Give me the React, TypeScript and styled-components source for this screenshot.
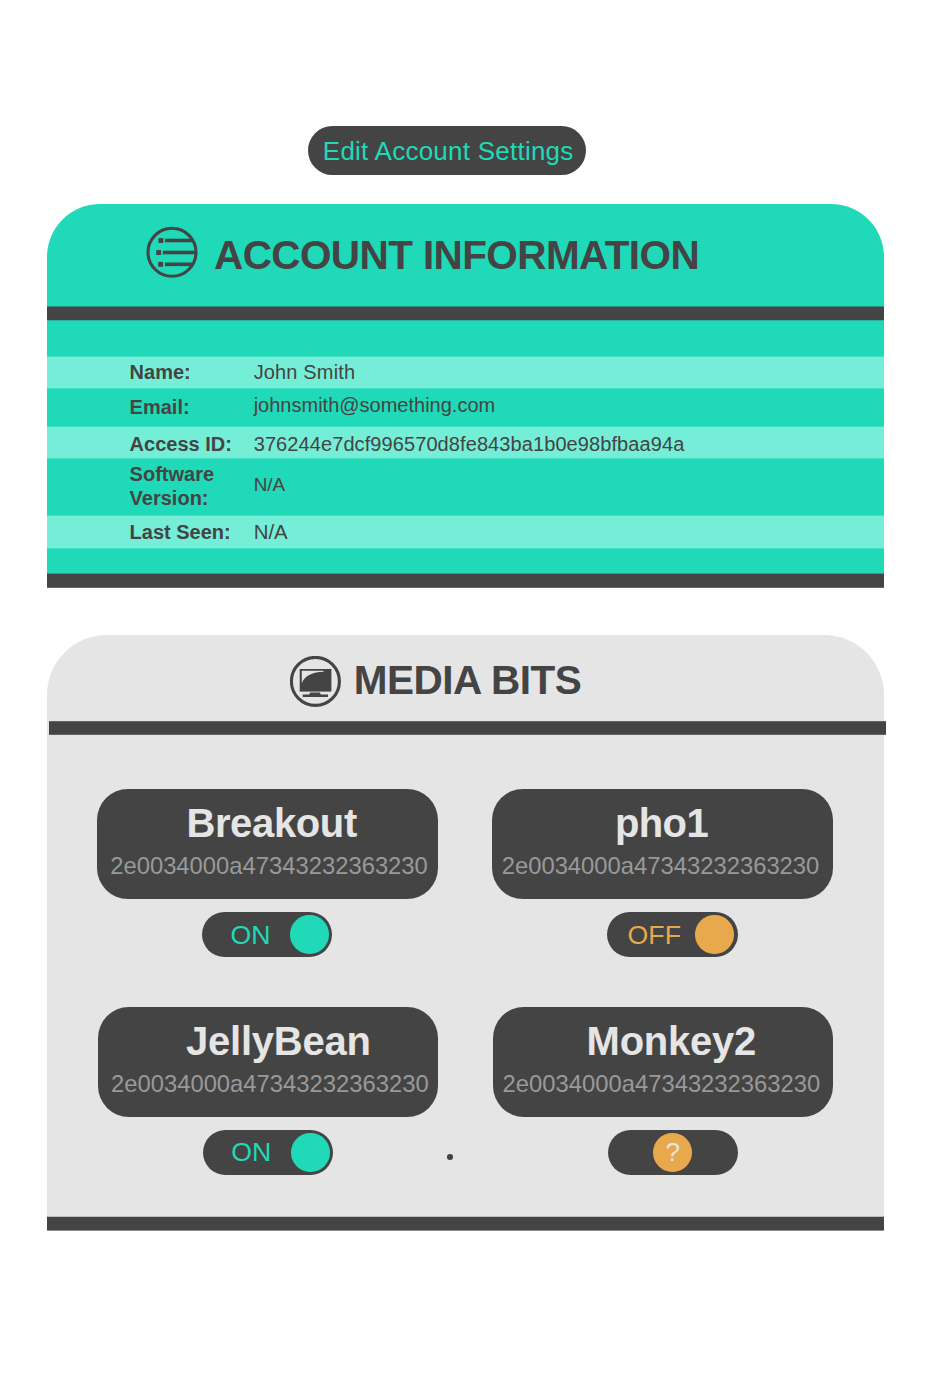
import React from 'react';
import styled, { createGlobalStyle } from 'styled-components';

const teal = '#20d9b8';
const mint = '#75eed8';
const ink = '#444444';
const fog = '#e5e5e5';
const amber = '#e8a84c';

const GlobalStyle = createGlobalStyle`
  *, *::before, *::after { box-sizing: border-box; }
  body {
    margin: 0;
    background: #ffffff;
    color: ${ink};
    font-family: "Liberation Sans", Arial, Helvetica, sans-serif;
  }
`;

const Page = styled.main`
  width: 951px;
  height: 1379px;
  padding: 126px 0 0 47px;
  display: flex;
  flex-direction: column;
  align-items: flex-start;
  overflow: hidden;
`;

const EditButton = styled.button`
  width: 277.5px;
  height: 49px;
  margin-left: 261px;
  padding: 0 0 0 14.8px;
  border: 0;
  border-radius: 25px;
  background: ${ink};
  color: ${teal};
  font: 26px/50px "Liberation Sans", Arial, sans-serif;
  letter-spacing: 0.24px;
  text-align: left;
  white-space: nowrap;
`;

const Panel = styled.section<{ $tone: string; $radius: number; $gap: number }>`
  width: 837px;
  margin-top: ${p => p.$gap}px;
  border-radius: ${p => p.$radius}px ${p => p.$radius}px 0 0;
  background: ${p => p.$tone};
`;

const PanelHeader = styled.header<{ $height: number; $indent: number; $top: number }>`
  display: flex;
  align-items: flex-start;
  height: ${p => p.$height}px;
  padding: ${p => p.$top}px 0 0 ${p => p.$indent}px;
`;

const PanelIcon = styled.svg`
  flex: none;
  width: 52px;
  height: 52px;
`;

const PanelTitle = styled.h2<{ $gap: number; $drop: number; $tracking: number }>`
  margin: ${p => p.$drop}px 0 0 ${p => p.$gap}px;
  font-size: 40.5px;
  font-weight: bold;
  line-height: 48px;
  letter-spacing: ${p => p.$tracking}px;
  white-space: nowrap;
`;

const Rule = styled.div<{ $height: number; $top: number; $bottom: number; $shift?: number }>`
  height: ${p => p.$height}px;
  margin-left: ${p => p.$shift ?? 0}px;
  margin-right: ${p => -(p.$shift ?? 0)}px;
  border-top: 1px solid rgba(68, 68, 68, ${p => p.$top});
  border-bottom: 1px solid rgba(68, 68, 68, ${p => p.$bottom});
  background: ${ink};
  background-clip: padding-box;
`;

const Details = styled.dl`
  height: 252px;
  margin: 0;
  padding-top: 35px;
`;

const DetailRow = styled.div<{ $height: number; $striped?: boolean }>`
  display: grid;
  grid-template-columns: 123.7px 1fr;
  align-items: start;
  height: ${p => p.$height}px;
  padding-left: 82.6px;
  border-top: 1px solid ${p => (p.$striped ? 'rgba(117, 238, 216, 0.4)' : 'transparent')};
  border-bottom: 1px solid ${p => (p.$striped ? 'rgba(117, 238, 216, 0.4)' : 'transparent')};
  background: ${p => (p.$striped ? mint : 'transparent')};
  background-clip: padding-box;
`;

const Term = styled.dt<{ $top: number }>`
  width: 110px;
  padding-top: ${p => p.$top}px;
  font-size: 20px;
  font-weight: bold;
  line-height: 24px;
`;

const Value = styled.dd<{ $top: number; $size?: number; $tracking?: number }>`
  margin: 0;
  padding: ${p => p.$top}px 0 0 0.4px;
  font-size: ${p => p.$size ?? 20}px;
  line-height: 24px;
  letter-spacing: ${p => p.$tracking ?? 0}px;
  white-space: nowrap;
`;

const Bits = styled.div`
  height: 481px;
  padding-top: 54px;
`;

const BitRow = styled.div<{ $indent: number }>`
  display: flex;
  height: 218px;
  padding-left: ${p => p.$indent}px;
`;

const Gutter = styled.div`
  flex: none;
  width: 54.5px;
  padding: 147px 0 0 9.2px;
`;

const Dot = styled.div`
  width: 5.6px;
  height: 5.6px;
  border-radius: 50%;
  background: ${ink};
`;

const Bit = styled.article`
  flex: none;
  width: 340.5px;
`;

const Plate = styled.div`
  height: 110px;
  padding-top: 10px;
  border-radius: 31px;
  background: ${ink};
  white-space: nowrap;
`;

const BitName = styled.h3<{ $indent: number; $tracking: number }>`
  margin: 0;
  padding-left: ${p => p.$indent}px;
  color: ${fog};
  font-size: 40px;
  font-weight: bold;
  line-height: 48px;
  letter-spacing: ${p => p.$tracking}px;
`;

const BitCode = styled.p<{ $indent: number }>`
  margin: 5px 0 0;
  padding-left: ${p => p.$indent}px;
  color: #999999;
  font-size: 23.8px;
  line-height: 28px;
`;

const Switch = styled.div<{ $indent: number; $centered: boolean }>`
  display: flex;
  justify-content: ${p => (p.$centered ? 'center' : 'space-between')};
  width: 130.4px;
  height: 44.5px;
  margin: 13px 0 0 ${p => p.$indent}px;
  padding: 3px 3.6px 0 ${p => (p.$centered ? 2.5 : 0)}px;
  border-radius: 23px;
  background: ${ink};
`;

const SwitchLabel = styled.span<{ $color: string; $indent: number; $drop: number }>`
  margin: ${p => p.$drop}px 0 0 ${p => p.$indent}px;
  color: ${p => p.$color};
  font-size: 26.7px;
  line-height: 38px;
`;

const Knob = styled.span<{ $color: string }>`
  flex: none;
  width: 38.5px;
  height: 38.5px;
  border-radius: 50%;
  background: ${p => p.$color};
  color: ${fog};
  font-size: 26px;
  line-height: 38px;
  text-align: center;
`;

type BitInfo = {
  name: string;
  nameIndent: number;
  tracking: number;
  codeIndent: number;
  switchIndent: number;
  state: 'on' | 'off' | 'unknown';
  labelDrop: number;
};

const code = '2e0034000a47343232363230';

const rows: { indent: number; dot: boolean; bits: [BitInfo, BitInfo] }[] = [
  {
    indent: 50,
    dot: false,
    bits: [
      { name: 'Breakout', nameIndent: 89.4, tracking: -0.36, codeIndent: 13.2, switchIndent: 105, state: 'on', labelDrop: 1 },
      { name: 'pho1', nameIndent: 122.9, tracking: -0.6, codeIndent: 9.7, switchIndent: 115.2, state: 'off', labelDrop: 1 },
    ],
  },
  {
    indent: 50.6,
    dot: true,
    bits: [
      { name: 'JellyBean', nameIndent: 88.5, tracking: -0.25, codeIndent: 13.4, switchIndent: 105.2, state: 'on', labelDrop: 0 },
      { name: 'Monkey2', nameIndent: 94, tracking: -0.25, codeIndent: 10, switchIndent: 115.4, state: 'unknown', labelDrop: 0 },
    ],
  },
];

const ListIcon = () => (
  <PanelIcon viewBox="0 0 52 52" aria-hidden="true">
    <defs>
      <clipPath id="list-clip"><circle cx="26" cy="26.3" r="24.5" /></clipPath>
    </defs>
    <circle cx="26" cy="26.3" r="24" fill="none" stroke={ink} strokeWidth="3.1" />
    <g fill={ink} clipPath="url(#list-clip)">
      <rect x="12.5" y="12.1" width="4.9" height="4.9" />
      <rect x="19" y="12.7" width="32" height="3.6" />
      <rect x="10.2" y="24.1" width="4.9" height="4.9" />
      <rect x="16.9" y="24.7" width="34" height="3.6" />
      <rect x="12.2" y="35.9" width="4.9" height="4.9" />
      <rect x="19" y="36.5" width="32" height="3.6" />
    </g>
  </PanelIcon>
);

const ScreenIcon = () => (
  <PanelIcon viewBox="0 0 52 52" aria-hidden="true">
    <circle cx="25.4" cy="25.4" r="24" fill="none" stroke={ink} strokeWidth="3.1" />
    <rect x="9.7" y="13" width="31.7" height="22.6" fill={ink} />
    <path d="M11.8 14.7H33.5V15.8C23 16 14.5 19.5 11.8 27.2Z" fill={fog} />
    <path d="M20.2 36.6H29.8L30.8 38.4H38V41H12.7V38.4H19.2Z" fill={ink} />
  </PanelIcon>
);

const BitCard = ({ bit }: { bit: BitInfo }) => {
  const color = bit.state === 'on' ? teal : amber;
  const unknown = bit.state === 'unknown';
  return (
    <Bit>
      <Plate>
        <BitName $indent={bit.nameIndent} $tracking={bit.tracking}>{bit.name}</BitName>
        <BitCode $indent={bit.codeIndent}>{code}</BitCode>
      </Plate>
      <Switch $indent={bit.switchIndent} $centered={unknown}>
        {!unknown && (
          <SwitchLabel $color={color} $indent={bit.state === 'on' ? 28.4 : 20.4} $drop={bit.labelDrop}>
            {bit.state === 'on' ? 'ON' : 'OFF'}
          </SwitchLabel>
        )}
        <Knob $color={color}>{unknown ? '?' : null}</Knob>
      </Switch>
    </Bit>
  );
};

export default function App() {
  return (
    <Page>
      <GlobalStyle />
      <EditButton type="button">Edit Account Settings</EditButton>

      <Panel $tone={teal} $radius={53} $gap={29}>
        <PanelHeader $height={102} $indent={99} $top={22}>
          <ListIcon />
          <PanelTitle $gap={16} $drop={5} $tracking={-0.6}>ACCOUNT INFORMATION</PanelTitle>
        </PanelHeader>
        <Rule $height={15} $top={0.5} $bottom={0.25} />
        <Details>
          <DetailRow $height={33} $striped>
            <Term $top={3}>Name:</Term>
            <Value $top={3} $tracking={0.15}>John Smith</Value>
          </DetailRow>
          <DetailRow $height={37}>
            <Term $top={5}>Email:</Term>
            <Value $top={3}>johnsmith@something.com</Value>
          </DetailRow>
          <DetailRow $height={33} $striped>
            <Term $top={5}>Access ID:</Term>
            <Value $top={5} $tracking={0.09}>376244e7dcf996570d8fe843ba1b0e98bfbaa94a</Value>
          </DetailRow>
          <DetailRow $height={56}>
            <Term $top={2}>Software Version:</Term>
            <Value $top={13} $size={18.9}>N/A</Value>
          </DetailRow>
          <DetailRow $height={34} $striped>
            <Term $top={4}>Last Seen:</Term>
            <Value $top={4} $size={20.4}>N/A</Value>
          </DetailRow>
        </Details>
        <Rule $height={15} $top={0.4} $bottom={0.6} />
      </Panel>

      <Panel $tone={fog} $radius={60} $gap={47}>
        <PanelHeader $height={86} $indent={243} $top={21}>
          <ScreenIcon />
          <PanelTitle $gap={11.7} $drop={0} $tracking={-0.5}>MEDIA BITS</PanelTitle>
        </PanelHeader>
        <Rule $height={14} $top={0.8} $bottom={0.8} $shift={2} />
        <Bits>
          {rows.map(row => (
            <BitRow key={row.indent} $indent={row.indent}>
              <BitCard bit={row.bits[0]} />
              <Gutter>{row.dot && <Dot />}</Gutter>
              <BitCard bit={row.bits[1]} />
            </BitRow>
          ))}
        </Bits>
        <Rule $height={15} $top={0.25} $bottom={0.55} />
      </Panel>
    </Page>
  );
}
